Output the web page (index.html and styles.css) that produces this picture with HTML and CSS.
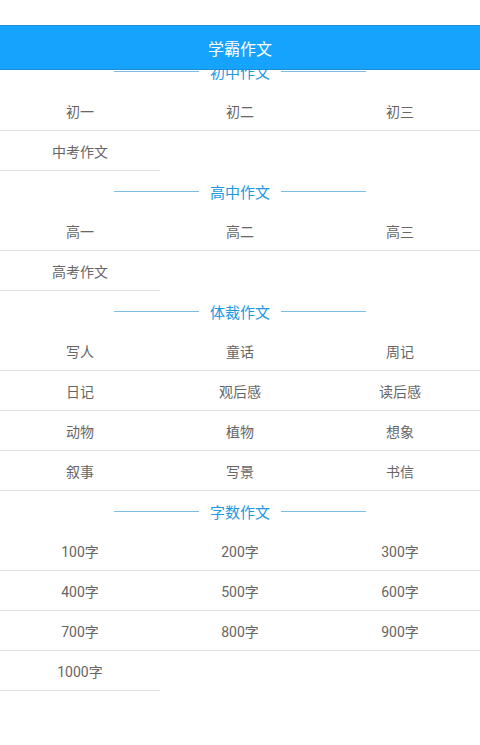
FILE: index.html
```html
<!DOCTYPE html>
<html lang="zh">
<head>
<meta charset="utf-8">
<title>学霸作文</title>
<link rel="stylesheet" href="styles.css">
</head>
<body>
<header class="topbar">学霸作文</header>
<main class="content">
  <section class="group">
    <h2 class="group-title"><span>初中作文</span></h2>
    <div class="grid">
      <a class="cell">初一</a><a class="cell">初二</a><a class="cell">初三</a>
      <a class="cell">中考作文</a>
    </div>
  </section>
  <section class="group">
    <h2 class="group-title"><span>高中作文</span></h2>
    <div class="grid">
      <a class="cell">高一</a><a class="cell">高二</a><a class="cell">高三</a>
      <a class="cell">高考作文</a>
    </div>
  </section>
  <section class="group">
    <h2 class="group-title"><span>体裁作文</span></h2>
    <div class="grid">
      <a class="cell">写人</a><a class="cell">童话</a><a class="cell">周记</a>
      <a class="cell">日记</a><a class="cell">观后感</a><a class="cell">读后感</a>
      <a class="cell">动物</a><a class="cell">植物</a><a class="cell">想象</a>
      <a class="cell">叙事</a><a class="cell">写景</a><a class="cell">书信</a>
    </div>
  </section>
  <section class="group">
    <h2 class="group-title"><span>字数作文</span></h2>
    <div class="grid">
      <a class="cell">100字</a><a class="cell">200字</a><a class="cell">300字</a>
      <a class="cell">400字</a><a class="cell">500字</a><a class="cell">600字</a>
      <a class="cell">700字</a><a class="cell">800字</a><a class="cell">900字</a>
      <a class="cell">1000字</a>
    </div>
  </section>
</main>
</body>
</html>
```
FILE: styles.css
```css
* { box-sizing: border-box; }
html, body {
  margin: 0;
  padding: 0;
  background: #ffffff;
  font-family: Roboto, "Noto Sans CJK SC", "Noto Sans", sans-serif;
}
.topbar {
  position: fixed;
  top: 25px;
  left: 0;
  right: 0;
  height: 45px;
  background: #16a3fd;
  border-top: 1px solid #1b8fd9;
  border-bottom: 1px solid #1a8fd8;
  color: #ffffff;
  font-size: 16px;
  display: flex;
  align-items: center;
  justify-content: center;
  z-index: 10;
}
.content {
  padding-top: 51px;
}
.group-title {
  margin: 0;
  height: 40px;
  display: flex;
  align-items: center;
  justify-content: center;
  font-weight: normal;
  font-size: 15px;
  color: #2299e2;
}
.group-title span {
  display: flex;
  align-items: center;
  gap: 11px;
}
.group-title span::before,
.group-title span::after {
  content: "";
  width: 85px;
  height: 1px;
  background: #7dbbe3;
}
.grid {
  display: grid;
  grid-template-columns: repeat(3, 1fr);
}
.cell {
  height: 40px;
  display: flex;
  align-items: center;
  justify-content: center;
  font-size: 14px;
  color: #666666;
  border-bottom: 1px solid #e2e2e2;
  text-decoration: none;
}
```
